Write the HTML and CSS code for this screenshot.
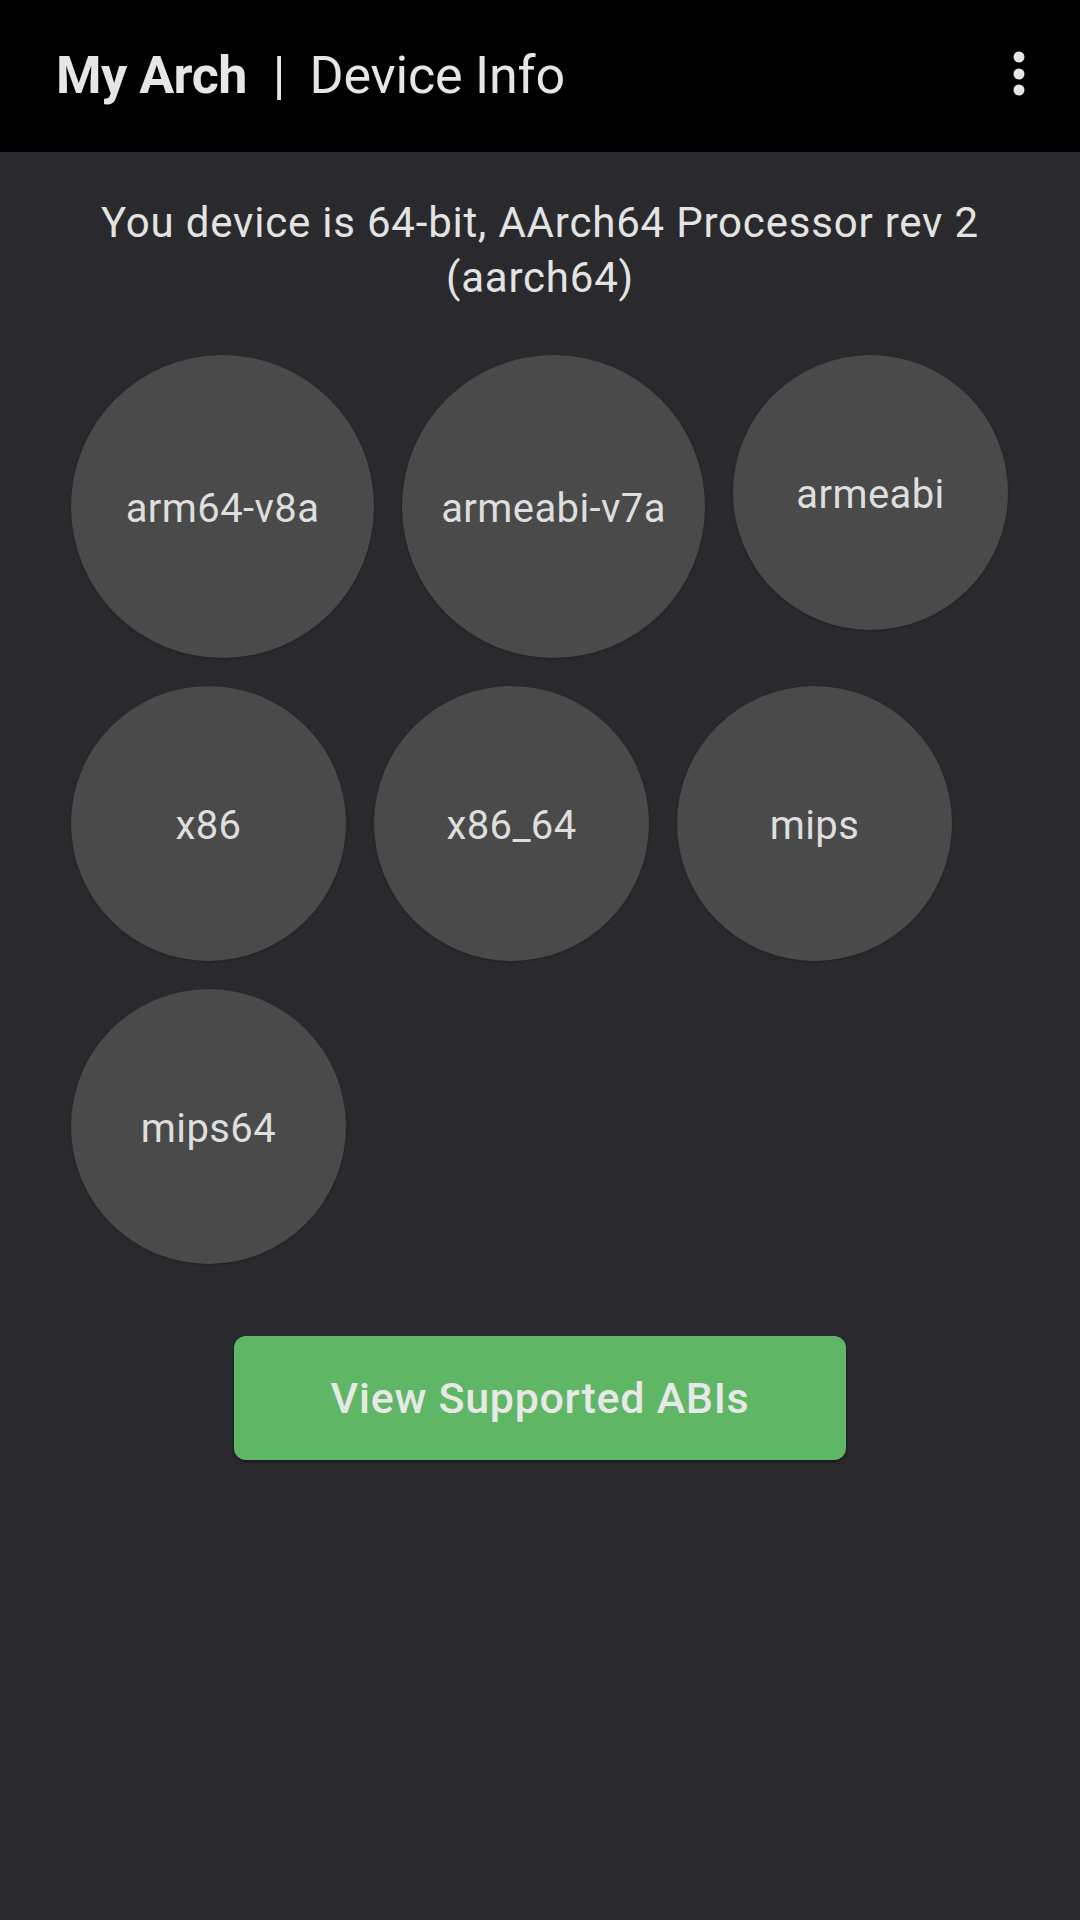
FILE: index.html
```html
<!DOCTYPE html>
<html>
<head>
<meta charset="utf-8">
<link rel="stylesheet" href="styles.css">
</head>
<body>
<header class="appbar">
  <div class="title">
    <span class="app-name">My Arch</span>
    <span class="sep">|</span>
    <span class="subtitle">Device Info</span>
  </div>
  <div class="menu" aria-label="More options">
    <svg width="24" height="60" viewBox="0 0 24 60">
      <circle cx="12" cy="13" r="5.5" fill="#e6e6e6"/>
      <circle cx="12" cy="30" r="5.5" fill="#e6e6e6"/>
      <circle cx="12" cy="46" r="5.5" fill="#e6e6e6"/>
    </svg>
  </div>
</header>
<main class="content">
  <p class="info">You device is 64-bit, AArch64 Processor rev 2 (aarch64)</p>
  <div class="abis">
    <div class="abi abi-lg">arm64-v8a</div>
    <div class="abi abi-lg">armeabi-v7a</div>
    <div class="abi">armeabi</div>
    <div class="abi">x86</div>
    <div class="abi">x86_64</div>
    <div class="abi">mips</div>
    <div class="abi">mips64</div>
  </div>
  <div class="actions">
    <button class="btn">View Supported ABIs</button>
  </div>
</main>
</body>
</html>
```
FILE: styles.css
```css
* { box-sizing: border-box; }
html, body {
  margin: 0;
  padding: 0;
  height: 100%;
}
body {
  background: #2a2a2e;
  color: #e3e3e3;
  font-family: Roboto, "Noto Sans", sans-serif;
  width: 1080px;
  min-height: 1920px;
}
.appbar {
  height: 152px;
  background: #000;
  display: flex;
  align-items: center;
  justify-content: space-between;
  padding: 0 49px 0 56px;
}
.title {
  display: flex;
  align-items: baseline;
  color: #e6e6e6;
  font-size: 52px;
  line-height: 1;
  margin-top: 0;
}
.app-name {
  font-weight: 700;
  letter-spacing: -0.5px;
}
.sep {
  font-weight: 400;
  margin: 0 24px 0 26px;
}
.subtitle {
  font-weight: 400;
  letter-spacing: -0.2px;
}
.menu {
  display: flex;
  align-items: center;
  margin-top: -4px;
}
.content {
  padding: 43px 0 0;
}
.info {
  margin: 0 auto;
  width: 1000px;
  text-align: center;
  font-size: 42px;
  line-height: 55px;
  letter-spacing: 0.8px;
  color: #e3e3e3;
}
.abis {
  margin-top: 50px;
  padding: 0 40px 0 71px;
  display: flex;
  flex-wrap: wrap;
  align-items: flex-start;
  column-gap: 28px;
  row-gap: 28px;
}
.abi {
  width: 275px;
  height: 275px;
  border-radius: 50%;
  background: #4a4a4a;
  display: flex;
  align-items: center;
  justify-content: center;
  font-size: 40px;
  letter-spacing: 0.4px;
  color: #dedede;
  padding-top: 4px;
  box-shadow: 0 1px 3px rgba(0,0,0,0.25);
}
.abi-lg {
  width: 303px;
  height: 303px;
}
.actions {
  display: flex;
  justify-content: center;
  margin-top: 72px;
}
.btn {
  width: 612px;
  height: 124px;
  border: none;
  border-radius: 12px;
  background: #5fb766;
  color: #e8e8e8;
  font-family: Roboto, "Noto Sans", sans-serif;
  font-size: 43px;
  font-weight: 500;
  letter-spacing: 0.7px;
  box-shadow: 0 2px 4px rgba(0,0,0,0.35);
  padding: 0;
}
```
